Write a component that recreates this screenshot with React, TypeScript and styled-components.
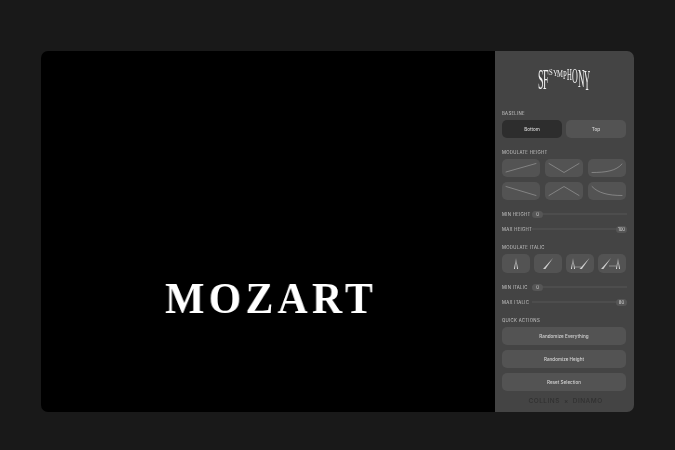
import React from 'react'
import styled, { createGlobalStyle, css } from 'styled-components'

const GlobalStyle = createGlobalStyle`
  html, body { margin: 0; padding: 0; background: #191919; }
  * { box-sizing: border-box; }
`

// own layer, so small text gets grey antialiasing rather than LCD fringes
const greyText = css`
  will-change: transform;
`

const Page = styled.div`
  width: 675px;
  height: 450px;
  padding: 51px 41px 38px;
  font-family: Inter, "Liberation Sans", sans-serif;
`

const Card = styled.div`
  display: flex;
  height: 361px;
  border-radius: 7px;
  overflow: hidden;
`

const Canvas = styled.div`
  flex: 1;
  background: #000;
  display: flex;
  justify-content: center;
  align-items: flex-end;
  padding-bottom: 88px;
`

const Word = styled.div`
  font-family: "Liberation Serif", serif;
  font-weight: 700;
  font-size: 45px;
  line-height: 52px;
  letter-spacing: 4.5px;
  color: #fff;
  margin-left: 6px;
  transform: scaleX(0.93);
  will-change: transform;
`

const Panel = styled.div`
  width: 139px;
  background: #444444;
  padding: 19px 8px 0 7px;
  display: flex;
  flex-direction: column;
`

const Logo = styled.div`
  height: 21px;
  margin-bottom: 19px;
  display: flex;
  justify-content: center;
  align-items: flex-start;
  font-family: "Liberation Serif", serif;
  color: #f2f2f2;
`

const LogoLetter = styled.span<{ $size: number; $stretch: number }>`
  font-size: ${(p) => p.$size}px;
  line-height: ${(p) => p.$size}px;
  display: block;
  transform-origin: top center;
  transform: translateY(${(p) => 1 - 0.18 * p.$size * p.$stretch}px) scaleY(${(p) => p.$stretch});
  ${greyText}
`

const Label = styled.div<{ $top?: number }>`
  font-size: 4.3px;
  line-height: 6px;
  padding-top: 1px;
  letter-spacing: 0.3px;
  text-transform: uppercase;
  color: #c8c8c8;
  margin-top: ${(p) => p.$top ?? 0}px;
  margin-bottom: 3px;
  ${greyText}
`

const Toggle = styled.div`
  display: grid;
  grid-template-columns: 60px 60px;
  gap: 4px;
`

const ToggleButton = styled.div<{ $active?: boolean }>`
  height: 18px;
  border-radius: 5px;
  background: ${(p) => (p.$active ? '#2d2d2d' : '#535353')};
  color: #d4d4d4;
  font-size: 4.6px;
  font-weight: 500;
  display: flex;
  align-items: center;
  justify-content: center;
  ${greyText}
`

const CurveGrid = styled.div`
  display: grid;
  grid-template-columns: repeat(3, 38px);
  justify-content: space-between;
  row-gap: 5px;
`

const Tile = styled.div<{ $h: number }>`
  height: ${(p) => p.$h}px;
  border-radius: 5px;
  background: #535353;
  display: flex;
  align-items: center;
  justify-content: center;
`

const ItalicGrid = styled.div`
  display: grid;
  grid-template-columns: repeat(4, 28px);
  justify-content: space-between;
`

const SliderRow = styled.div<{ $top: number }>`
  display: flex;
  align-items: center;
  height: 10px;
  margin-top: ${(p) => p.$top}px;
  margin-right: -1px;
`

const SliderLabel = styled.div`
  width: 30px;
  flex: none;
  white-space: nowrap;
  font-size: 4.3px;
  letter-spacing: 0.3px;
  text-transform: uppercase;
  color: #c8c8c8;
  ${greyText}
`

const Track = styled.div<{ $end?: boolean }>`
  flex: 1;
  height: 7px;
  display: flex;
  justify-content: ${(p) => (p.$end ? 'flex-end' : 'flex-start')};
  background: linear-gradient(#4d4d4d, #4d4d4d) center / 100% 2px no-repeat;
`

const Thumb = styled.div`
  width: 11px;
  height: 7px;
  border-radius: 4px;
  background: #565656;
  color: #d8d8d8;
  font-size: 4.3px;
  display: flex;
  align-items: center;
  justify-content: center;
  ${greyText}
`

const Actions = styled.div`
  display: flex;
  flex-direction: column;
  gap: 5px;
`

const ActionButton = styled.div`
  height: 18px;
  border-radius: 5px;
  background: #535353;
  color: #d4d4d4;
  font-size: 4.6px;
  font-weight: 500;
  display: flex;
  align-items: center;
  justify-content: center;
  ${greyText}
`

const Footer = styled.div`
  margin-top: 6px;
  height: 8px;
  display: flex;
  justify-content: center;
  align-items: center;
  gap: 4px;
  font-size: 6.5px;
  font-weight: 500;
  letter-spacing: 0.5px;
  color: #303030;
  padding-left: 3px;
  ${greyText}
`

const Curve = ({ d }: { d: string }) => (
  <svg width="38" height="18" viewBox="0 0 38 18" fill="none">
    <path d={d} stroke="#aaaaaa" strokeWidth="0.55" strokeLinecap="round" />
  </svg>
)

const Upright = ({ x }: { x: number }) => (
  <path
    d={`M${x} 4 L${x - 2} 15 L${x - 1} 15 Z M${x} 4 L${x + 2} 15 L${x + 1} 15 Z`}
    fill="#e2e2e2"
  />
)

const Slanted = ({ x }: { x: number }) => (
  <path d={`M${x + 5} 4 L${x - 5} 15 L${x - 2.6} 15 Z`} fill="#cfcfcf" />
)

const ItalicIcon = ({ kind }: { kind: number }) => (
  <svg width="28" height="19" viewBox="0 0 28 19" fill="none">
    {kind === 0 && <Upright x={14} />}
    {kind === 1 && <Slanted x={14} />}
    {kind === 2 && (
      <>
        <Upright x={7} />
        <path d="M9 13 H15" stroke="#c8c8c8" strokeWidth="0.5" />
        <Slanted x={18.5} />
      </>
    )}
    {kind === 3 && (
      <>
        <Slanted x={8} />
        <path d="M11 12 H18" stroke="#c8c8c8" strokeWidth="0.5" />
        <Upright x={20} />
      </>
    )}
  </svg>
)

const curves = [
  'M4 13 L34 4.5',
  'M4 4.5 L19 13.5 L34 4.5',
  'M4 13.5 C18 13.5 28 12 34 5',
  'M4 4.5 L34 13.5',
  'M4 13.5 L19 4.5 L34 13.5',
  'M4 4.5 C10 11 20 13.5 34 13.5',
]

const logoLetters: [string, number, number][] = [
  ['S', 10, 2.9],
  ['F', 10, 2.9],
  ['S', 6.7, 1.13],
  ['Y', 6.7, 1.36],
  ['M', 6.7, 1.6],
  ['P', 6.7, 2],
  ['H', 6.7, 2.5],
  ['O', 8, 2.6],
  ['N', 9, 2.9],
  ['Y', 8.5, 3.5],
]

const App: React.FC = () => {
  return (
    <Page>
      <GlobalStyle />
      <Card>
        <Canvas>
          <Word>MOZART</Word>
        </Canvas>
        <Panel>
          <Logo>
            {logoLetters.map(([c, size, stretch], i) => (
              <LogoLetter key={i} $size={size} $stretch={stretch}>
                {c}
              </LogoLetter>
            ))}
          </Logo>

          <Label>Baseline</Label>
          <Toggle>
            <ToggleButton $active>Bottom</ToggleButton>
            <ToggleButton>Top</ToggleButton>
          </Toggle>

          <Label $top={11}>Modulate Height</Label>
          <CurveGrid>
            {curves.map((d) => (
              <Tile key={d} $h={18}>
                <Curve d={d} />
              </Tile>
            ))}
          </CurveGrid>
          <SliderRow $top={9}>
            <SliderLabel>Min Height</SliderLabel>
            <Track>
              <Thumb>0</Thumb>
            </Track>
          </SliderRow>
          <SliderRow $top={5}>
            <SliderLabel>Max Height</SliderLabel>
            <Track $end>
              <Thumb>100</Thumb>
            </Track>
          </SliderRow>

          <Label $top={10}>Modulate Italic</Label>
          <ItalicGrid>
            {[0, 1, 2, 3].map((k) => (
              <Tile key={k} $h={19}>
                <ItalicIcon kind={k} />
              </Tile>
            ))}
          </ItalicGrid>
          <SliderRow $top={9}>
            <SliderLabel>Min Italic</SliderLabel>
            <Track>
              <Thumb>0</Thumb>
            </Track>
          </SliderRow>
          <SliderRow $top={5}>
            <SliderLabel>Max Italic</SliderLabel>
            <Track $end>
              <Thumb>80</Thumb>
            </Track>
          </SliderRow>

          <Label $top={10}>Quick Actions</Label>
          <Actions>
            <ActionButton>Randomize Everything</ActionButton>
            <ActionButton>Randomize Height</ActionButton>
            <ActionButton>Reset Selection</ActionButton>
          </Actions>
          <Footer>
            <span>COLLINS</span>
            <span>×</span>
            <span>DINAMO</span>
          </Footer>
        </Panel>
      </Card>
    </Page>
  )
}

export default App
